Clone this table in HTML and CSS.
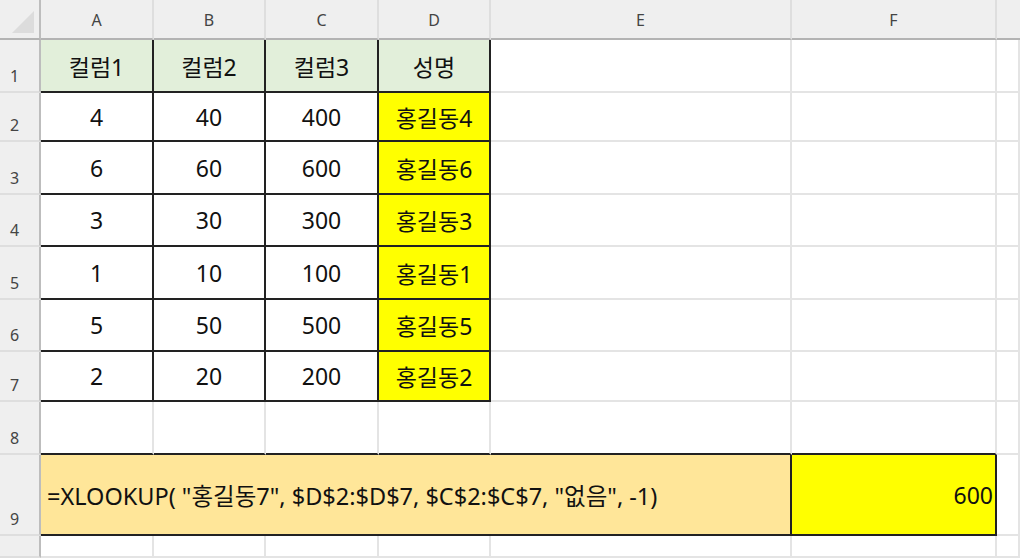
FILE: index.html
```html
<!DOCTYPE html>
<html lang="ko">
<head>
<meta charset="utf-8">
<link rel="stylesheet" href="styles.css">
</head>
<body>
<div class="sheet">
  <div class="corner"><svg width="22" height="22" viewBox="0 0 22 22"><polygon points="22,0 22,22 0,22" fill="#dcdcdc"/></svg></div>
  <div class="ch">A</div><div class="ch">B</div><div class="ch">C</div><div class="ch">D</div><div class="ch">E</div><div class="ch">F</div><div class="ch last"></div>

  <div class="rh">1</div>
  <div class="c t hd">컬럼1</div><div class="c t hd">컬럼2</div><div class="c t hd">컬럼3</div><div class="c t hd">성명</div><div class="c"></div><div class="c"></div><div class="c"></div>

  <div class="rh">2</div>
  <div class="c t">4</div><div class="c t">40</div><div class="c t">400</div><div class="c t yl">홍길동4</div><div class="c"></div><div class="c"></div><div class="c"></div>

  <div class="rh">3</div>
  <div class="c t">6</div><div class="c t">60</div><div class="c t">600</div><div class="c t yl">홍길동6</div><div class="c"></div><div class="c"></div><div class="c"></div>

  <div class="rh">4</div>
  <div class="c t">3</div><div class="c t">30</div><div class="c t">300</div><div class="c t yl">홍길동3</div><div class="c"></div><div class="c"></div><div class="c"></div>

  <div class="rh">5</div>
  <div class="c t">1</div><div class="c t">10</div><div class="c t">100</div><div class="c t yl">홍길동1</div><div class="c"></div><div class="c"></div><div class="c"></div>

  <div class="rh">6</div>
  <div class="c t">5</div><div class="c t">50</div><div class="c t">500</div><div class="c t yl">홍길동5</div><div class="c"></div><div class="c"></div><div class="c"></div>

  <div class="rh">7</div>
  <div class="c t">2</div><div class="c t">20</div><div class="c t">200</div><div class="c t yl">홍길동2</div><div class="c"></div><div class="c"></div><div class="c"></div>

  <div class="rh">8</div>
  <div class="c bb"></div><div class="c bb"></div><div class="c bb"></div><div class="c bb"></div><div class="c bb"></div><div class="c bb"></div><div class="c"></div>

  <div class="rh">9</div>
  <div class="c formula">=XLOOKUP( "홍길동7", $D$2:$D$7, $C$2:$C$7, "없음", -1)</div>
  <div class="c result">600</div>
  <div class="c"></div>

  <div class="rh"></div>
  <div class="c"></div><div class="c"></div><div class="c"></div><div class="c"></div><div class="c"></div><div class="c"></div><div class="c"></div>
</div>
</body>
</html>
```

FILE: styles.css
```css
html, body {
  margin: 0;
  padding: 0;
  background: #ffffff;
}
body {
  width: 1020px;
  height: 558px;
  overflow: hidden;
}
.sheet {
  display: grid;
  grid-template-columns: 41px 113px 112px 113px 112px 301px 205px 1fr;
  grid-template-rows: 40px 53px 49px 53px 52px 53px 52px 50px 53px 81px 1fr;
  width: 1020px;
  height: 558px;
  font-family: "Noto Sans", "Noto Sans CJK KR", sans-serif;
}
.sheet > div {
  box-sizing: border-box;
  min-width: 0;
  overflow: hidden;
}
.corner {
  background: #efefef;
  border-right: 2px solid #bdbdbd;
  border-bottom: 2px solid #b3b3b3;
  display: flex;
  align-items: flex-end;
  justify-content: flex-end;
  padding: 0 5px 5px 0;
}
.ch {
  background: #efefef;
  border-right: 2px solid #dedede;
  border-bottom: 2px solid #b3b3b3;
  display: flex;
  align-items: center;
  justify-content: center;
  font-size: 16px;
  color: #444;
  padding-top: 2px;
}
.ch.last { border-right: none; }
.rh {
  background: #efefef;
  border-right: 2px solid #bdbdbd;
  border-bottom: 2px solid #dedede;
  display: flex;
  align-items: flex-end;
  padding: 0 0 4px 10px;
  font-size: 16px;
  color: #444;
}
.c {
  border-right: 2px solid #e4e4e4;
  border-bottom: 2px solid #e4e4e4;
  display: flex;
  align-items: center;
  font-size: 23px;
  color: #111;
}
.t {
  justify-content: center;
  border-right: 2px solid #222;
  border-bottom: 2px solid #222;
}
.hd { background: #e2efda; }
.yl { background: #ffff00; }
.bb { border-bottom: 2px solid #222; }
.formula {
  grid-column: span 5;
  background: #ffe699;
  border-right: 2px solid #222;
  border-bottom: 2px solid #222;
  padding-left: 6px;
  white-space: nowrap;
  font-size: 23.5px;
}
.result {
  background: #ffff00;
  border-right: 2px solid #222;
  border-bottom: 2px solid #222;
  justify-content: flex-end;
  padding-right: 2px;
}
```
